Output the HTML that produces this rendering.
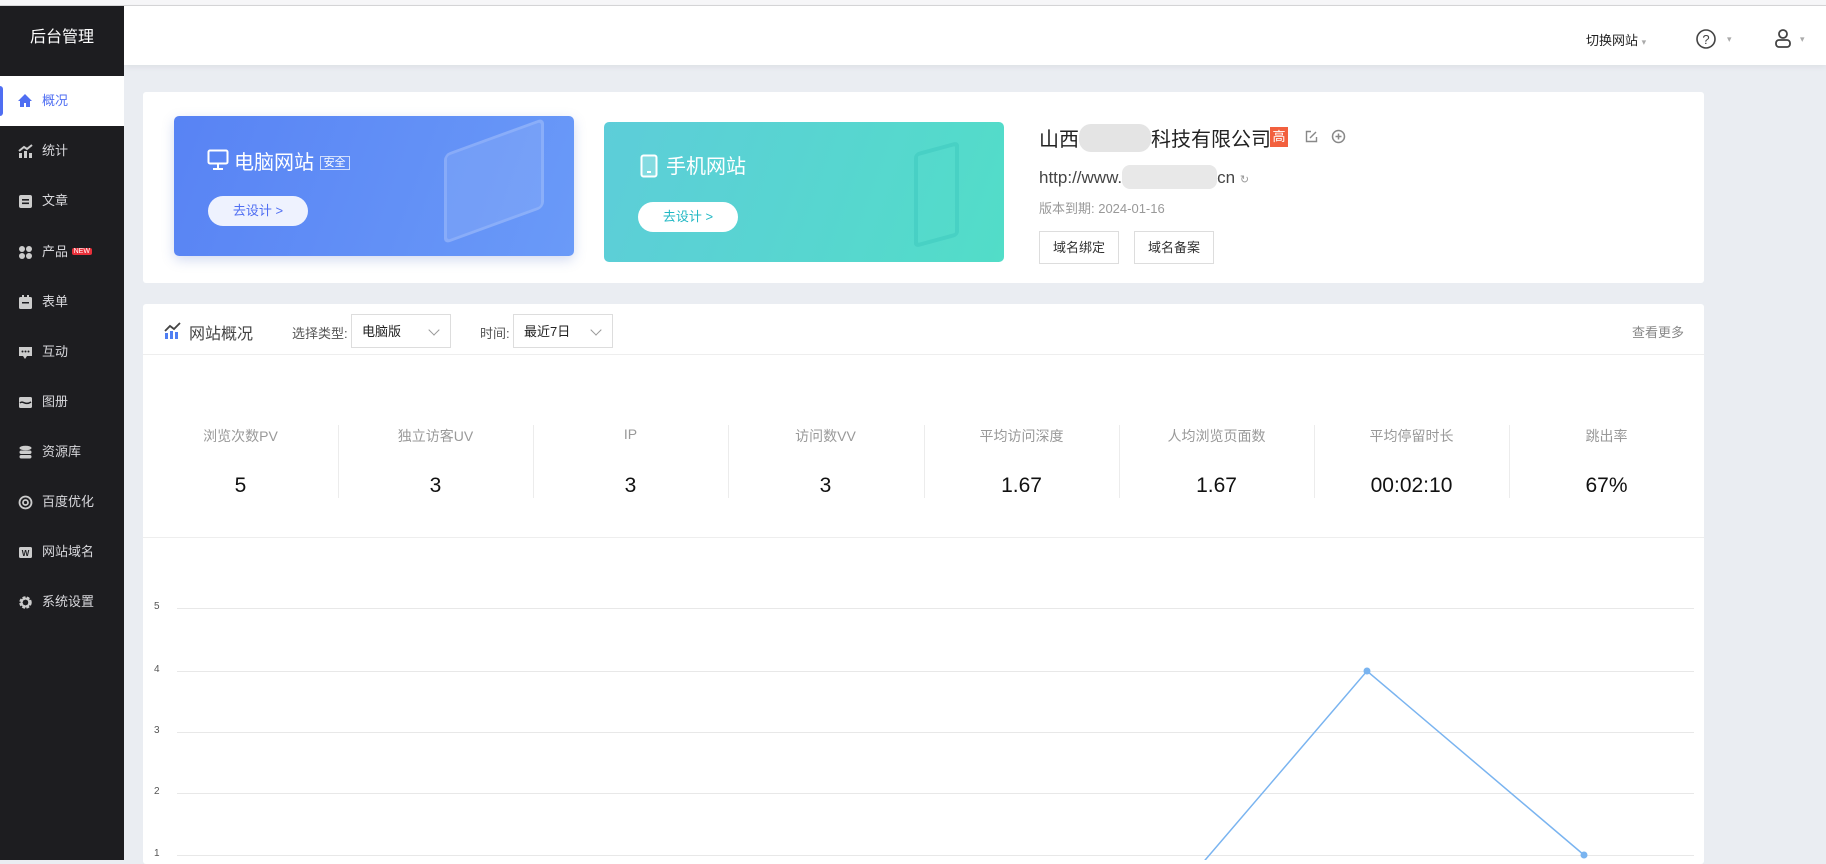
<!DOCTYPE html>
<html><head><meta charset="utf-8"><style>
*{margin:0;padding:0;box-sizing:border-box}
body{width:1826px;height:860px;overflow:hidden;background:#eaedf2;font-family:"Liberation Sans","Noto Sans CJK SC",sans-serif;position:relative}
.a{position:absolute}
.top{left:0;top:0;width:1826px;height:6px;background:#f6f6f8;border-bottom:1px solid #d6d6d8}
.side{left:0;top:6px;width:124px;height:854px;background:#1d1d20}
.logo{left:0;top:6px;width:124px;height:70px;background:#1d1d20;border-bottom-right-radius:6px;color:#fff;font-size:16px;text-align:center;line-height:64px}
.act{left:0;top:76px;width:124px;height:50px;background:#fff}
.ind{left:0;top:86px;width:3px;height:30px;background:#4f6ef2;border-radius:0 3px 3px 0}
.it{left:42px;font-size:13px;color:#d8d8dc;line-height:20px}
.ic{left:18px;width:15px;height:15px}
.hdr{left:124px;top:6px;width:1702px;height:59px;background:#fff;box-shadow:0 2px 6px rgba(0,0,0,.06)}
.card{background:#fff;border-radius:3px}
.btn{border:1px solid #ddd;font-size:13px;color:#333;text-align:center;line-height:32px;background:#fff;height:33px}
.lab{font-size:14px;color:#999;text-align:center;width:195px}
.val{font-size:21px;color:#111;text-align:center;width:195px}
.div{width:1px;height:73px;background:#ececec;top:425px}
.sel{border:1px solid #ddd;height:34px;font-size:13px;color:#222;line-height:32px;padding-left:10px}
.arr{position:absolute;right:12px;top:11px;width:8px;height:8px;border-right:1px solid #999;border-bottom:1px solid #999;transform:rotate(45deg)}
.gl{left:177px;width:1517px;height:1px;background:#e8e8e8}
.yl{left:154px;font-size:10px;color:#555}
</style></head><body>
<div class="a top"></div>
<div class="a hdr"></div>
<div class="a" style="left:1586px;top:30px;font-size:13px;color:#222">切换网站 <span style="color:#aaa;font-size:9px">▾</span></div>
<svg class="a" style="left:1695px;top:28px" width="42" height="22"><circle cx="11" cy="11" r="9" fill="none" stroke="#444" stroke-width="1.6"/><text x="11" y="16" font-size="13" text-anchor="middle" fill="#444" font-family="Liberation Sans">?</text><text x="32" y="14" font-size="9" fill="#aaa">▾</text></svg>
<svg class="a" style="left:1773px;top:28px" width="40" height="22"><circle cx="10" cy="6" r="4" fill="none" stroke="#444" stroke-width="1.8"/><rect x="3" y="12" width="14" height="7" rx="3" fill="none" stroke="#444" stroke-width="1.8"/><text x="27" y="14" font-size="9" fill="#aaa">▾</text></svg>

<div class="a side"></div>
<div class="a logo">后台管理</div>
<div class="a act"></div><div class="a ind"></div>
<svg class="a" style="left:17px;top:93px" width="16" height="15"><path d="M8 1L1 8h2v6h4v-4h2v4h4V8h2z" fill="#4f6ef2"/></svg>
<div class="a it" style="top:91px;color:#4f6ef2">概况</div>
<div class="a it" style="top:141px">统计</div>
<svg class="a ic" style="top:144px" viewBox="0 0 15 15"><rect x="1" y="9" width="3" height="5" fill="#ccc"/><rect x="6" y="7" width="3" height="7" fill="#ccc"/><rect x="11" y="9" width="3" height="5" fill="#ccc"/><path d="M1 7l5-4 3 2 5-4" stroke="#ccc" stroke-width="2" fill="none"/></svg>
<div class="a it" style="top:191px">文章</div>
<svg class="a ic" style="top:194px" viewBox="0 0 15 15"><rect x="1" y="1" width="13" height="13" rx="2" fill="#ccc"/><rect x="4" y="5" width="7" height="1.6" fill="#1d1d20"/><rect x="4" y="8.5" width="7" height="1.6" fill="#1d1d20"/></svg>
<div class="a it" style="top:242px">产品 <span style="background:#e8303a;color:#fff;font-size:7px;padding:0 2px;border-radius:2px;vertical-align:3px">NEW</span></div>
<svg class="a ic" style="top:245px" viewBox="0 0 15 15"><circle cx="4" cy="4" r="3" fill="#ccc"/><circle cx="11" cy="4" r="3" fill="#ccc"/><circle cx="4" cy="11" r="3" fill="#ccc"/><circle cx="11" cy="11" r="3" fill="#ccc"/></svg>
<div class="a it" style="top:292px">表单</div>
<svg class="a ic" style="top:295px" viewBox="0 0 15 15"><rect x="1" y="2" width="13" height="12" rx="1.5" fill="#ccc"/><rect x="4" y="0" width="2" height="3" fill="#ccc"/><rect x="9" y="0" width="2" height="3" fill="#ccc"/><rect x="4" y="7" width="7" height="1.5" fill="#1d1d20"/></svg>
<div class="a it" style="top:342px">互动</div>
<svg class="a ic" style="top:345px" viewBox="0 0 15 15"><path d="M1 2h13v9H9l-2 3-2-3H1z" fill="#ccc"/><circle cx="4.5" cy="6.5" r="1" fill="#1d1d20"/><circle cx="7.5" cy="6.5" r="1" fill="#1d1d20"/><circle cx="10.5" cy="6.5" r="1" fill="#1d1d20"/></svg>
<div class="a it" style="top:392px">图册</div>
<svg class="a ic" style="top:395px" viewBox="0 0 15 15"><rect x="1" y="2" width="13" height="11" rx="1.5" fill="#ccc"/><path d="M2 8c3-3 5 3 11-1" stroke="#1d1d20" stroke-width="1.5" fill="none"/></svg>
<div class="a it" style="top:442px">资源库</div>
<svg class="a ic" style="top:445px" viewBox="0 0 15 15"><ellipse cx="7.5" cy="3" rx="6" ry="2.3" fill="#ccc"/><rect x="1.5" y="5.5" width="12" height="3.5" rx="1.7" fill="#ccc"/><rect x="1.5" y="10" width="12" height="3.5" rx="1.7" fill="#ccc"/></svg>
<div class="a it" style="top:492px">百度优化</div>
<svg class="a ic" style="top:495px" viewBox="0 0 15 15"><circle cx="7.5" cy="7.5" r="6" fill="none" stroke="#ccc" stroke-width="1.8"/><circle cx="7.5" cy="7.5" r="2.5" fill="none" stroke="#ccc" stroke-width="1.8"/></svg>
<div class="a it" style="top:542px">网站域名</div>
<svg class="a ic" style="top:545px" viewBox="0 0 15 15"><rect x="1" y="2" width="13" height="11" rx="1.5" fill="#ccc"/><text x="7.5" y="11" font-size="8" font-weight="bold" text-anchor="middle" fill="#1d1d20">W</text></svg>
<div class="a it" style="top:592px">系统设置</div>
<svg class="a ic" style="top:595px" viewBox="0 0 15 15"><circle cx="7.5" cy="7.5" r="4.5" fill="none" stroke="#ccc" stroke-width="3.5" stroke-dasharray="2.5 1.2"/><circle cx="7.5" cy="7.5" r="4" fill="none" stroke="#ccc" stroke-width="2"/></svg>

<div class="a card" style="left:143px;top:92px;width:1561px;height:191px"></div>
<div class="a" style="left:174px;top:116px;width:400px;height:140px;border-radius:5px;background:linear-gradient(110deg,#5883f4,#6a9af8);box-shadow:0 4px 12px rgba(80,110,200,.25);overflow:hidden">
 <div class="a" style="left:270px;top:20px;width:100px;height:90px;border:3px solid rgba(255,255,255,.15);border-radius:6px;transform:skewY(-20deg);background:rgba(255,255,255,.1)"></div>
 <svg class="a" style="left:33px;top:33px" width="22" height="22"><rect x="1.5" y="1.5" width="19" height="13" rx="1.5" fill="none" stroke="#fff" stroke-width="2"/><path d="M11 15v4M6 20h10" stroke="#fff" stroke-width="2"/></svg>
 <div class="a" style="left:60px;top:30px;color:#fff;font-size:20px">电脑网站 <span style="font-size:11px;border:1px solid rgba(255,255,255,.7);padding:0 3px;vertical-align:3px">安全</span></div>
 <div class="a" style="left:34px;top:80px;width:100px;height:30px;border-radius:15px;background:#eef2fe;color:#4f6ef2;font-size:13px;text-align:center;line-height:30px">去设计 &gt;</div>
</div>
<div class="a" style="left:604px;top:122px;width:400px;height:140px;border-radius:5px;background:linear-gradient(110deg,#5dcdd9,#52ddc8);overflow:hidden">
 <div class="a" style="left:310px;top:25px;width:45px;height:95px;border:4px solid rgba(60,200,190,.5);border-radius:5px;transform:skewY(-15deg)"></div>
 <svg class="a" style="left:36px;top:32px" width="18" height="24"><rect x="1.5" y="1.5" width="15" height="21" rx="2" fill="rgba(255,255,255,.25)" stroke="#fff" stroke-width="2"/><path d="M7 18h4" stroke="#fff" stroke-width="2"/></svg>
 <div class="a" style="left:62px;top:28px;color:#fff;font-size:20px">手机网站</div>
 <div class="a" style="left:34px;top:80px;width:100px;height:30px;border-radius:15px;background:#fff;color:#22b8c4;font-size:13px;text-align:center;line-height:30px">去设计 &gt;</div>
</div>
<div class="a" style="left:1039px;top:123px;font-size:20px;color:#222">山西<span style="display:inline-block;width:72px;height:28px;background:#e4e4e4;border-radius:12px;vertical-align:-6px"></span>科技有限公司</div>
<div class="a" style="left:1270px;top:127px;width:18px;height:20px;background:#f2603e;color:#fff;font-size:13px;text-align:center;line-height:20px">高</div>
<svg class="a" style="left:1305px;top:130px" width="13" height="13"><path d="M6 1.5H1.5v10h10V7" fill="none" stroke="#888" stroke-width="1.4"/><path d="M5 8l6-6" stroke="#888" stroke-width="1.4"/></svg>
<svg class="a" style="left:1331px;top:129px" width="15" height="15"><circle cx="7.5" cy="7.5" r="6" fill="none" stroke="#888" stroke-width="1.5"/><path d="M7.5 4.5v6M4.5 7.5h6" stroke="#888" stroke-width="1.5"/></svg>
<div class="a" style="left:1039px;top:165px;font-size:17px;color:#444">http://www.<span style="display:inline-block;width:95px;height:24px;background:#e8e8e8;border-radius:8px;vertical-align:-6px"></span>cn <span style="font-size:11px;color:#999">↻</span></div>
<div class="a" style="left:1039px;top:198px;font-size:13px;color:#999">版本到期: 2024-01-16</div>
<div class="a btn" style="left:1039px;top:231px;width:80px">域名绑定</div>
<div class="a btn" style="left:1134px;top:231px;width:80px">域名备案</div>

<div class="a card" style="left:143px;top:304px;width:1561px;height:560px"></div>
<div class="a" style="left:143px;top:354px;width:1561px;height:1px;background:#eee"></div>
<svg class="a" style="left:164px;top:321px" width="18" height="18"><rect x="1" y="12" width="3" height="6" fill="#4f7ef2"/><rect x="6" y="10" width="3" height="8" fill="#4f7ef2"/><rect x="11" y="11" width="3" height="7" fill="#4f7ef2"/><path d="M1 10l5-5 4 3 6-6" stroke="#444" stroke-width="1.8" fill="none"/></svg>
<div class="a" style="left:189px;top:320px;font-size:16px;color:#444">网站概况</div>
<div class="a" style="left:292px;top:323px;font-size:13px;color:#555">选择类型:</div>
<div class="a sel" style="left:351px;top:314px;width:100px;line-height:34px">电脑版<span class="arr"></span></div>
<div class="a" style="left:480px;top:323px;font-size:13px;color:#555">时间:</div>
<div class="a sel" style="left:513px;top:314px;width:100px;line-height:34px">最近7日<span class="arr"></span></div>
<div class="a" style="left:1632px;top:322px;font-size:13px;color:#888">查看更多</div>

<div class="a lab" style="left:143px;top:426px">浏览次数PV</div>
<div class="a lab" style="left:338px;top:426px">独立访客UV</div>
<div class="a lab" style="left:533px;top:426px">IP</div>
<div class="a lab" style="left:728px;top:426px">访问数VV</div>
<div class="a lab" style="left:924px;top:426px">平均访问深度</div>
<div class="a lab" style="left:1119px;top:426px">人均浏览页面数</div>
<div class="a lab" style="left:1314px;top:426px">平均停留时长</div>
<div class="a lab" style="left:1509px;top:426px">跳出率</div>
<div class="a val" style="left:143px;top:474px">5</div>
<div class="a val" style="left:338px;top:474px">3</div>
<div class="a val" style="left:533px;top:474px">3</div>
<div class="a val" style="left:728px;top:474px">3</div>
<div class="a val" style="left:924px;top:474px">1.67</div>
<div class="a val" style="left:1119px;top:474px">1.67</div>
<div class="a val" style="left:1314px;top:474px">00:02:10</div>
<div class="a val" style="left:1509px;top:474px">67%</div>
<div class="a div" style="left:338px"></div><div class="a div" style="left:533px"></div><div class="a div" style="left:728px"></div><div class="a div" style="left:924px"></div><div class="a div" style="left:1119px"></div><div class="a div" style="left:1314px"></div><div class="a div" style="left:1509px"></div>
<div class="a" style="left:143px;top:537px;width:1561px;height:1px;background:#eee"></div>

<div class="a gl" style="top:608px"></div><div class="a gl" style="top:671px"></div><div class="a gl" style="top:732px"></div><div class="a gl" style="top:793px"></div><div class="a gl" style="top:855px"></div>
<div class="a yl" style="top:601px">5</div><div class="a yl" style="top:664px">4</div><div class="a yl" style="top:725px">3</div><div class="a yl" style="top:786px">2</div><div class="a yl" style="top:848px">1</div>
<svg class="a" style="left:0;top:0" width="1826" height="860"><polyline points="1200,866 1367,671 1584,855" fill="none" stroke="#7ab4f0" stroke-width="1.5"/><circle cx="1367" cy="671" r="3.5" fill="#7ab4f0"/><circle cx="1584" cy="855" r="3.5" fill="#7ab4f0"/></svg>
</body></html>
